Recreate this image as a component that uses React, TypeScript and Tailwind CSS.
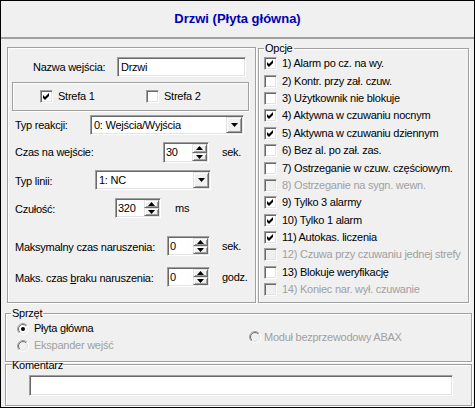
import React from "react";

const sunken =
  "border border-t-[#a0a0a0] border-l-[#a0a0a0] border-b-white border-r-white shadow-[inset_1px_1px_0_#696969,inset_-1px_-1px_0_#e3e3e3]";
const raised =
  "border border-t-[#e3e3e3] border-l-[#e3e3e3] border-b-[#696969] border-r-[#696969] shadow-[inset_1px_1px_0_#ffffff,inset_-1px_-1px_0_#a0a0a0] bg-[#f0f0f0]";
const etched = "border border-[#a0a0a0] shadow-[inset_1px_1px_0_#ffffff,1px_1px_0_#ffffff]";

function Check({ checked, disabled }: { checked?: boolean; disabled?: boolean }) {
  return (
    <div
      className={`w-[13px] h-[13px] shrink-0 flex items-center justify-center ${sunken} ${
        disabled ? "bg-[#f0f0f0]" : "bg-white"
      }`}
    >
      {checked && (
        <svg width="7" height="7" viewBox="0 0 7 7">
          <polygon points="0,2 2,4 6,0 6,3 2,7 0,5" fill={disabled ? "#a0a0a0" : "#000"} />
        </svg>
      )}
    </div>
  );
}

function Radio({ checked, disabled, id }: { checked?: boolean; disabled?: boolean; id: string }) {
  return (
    <svg width="12" height="12" viewBox="0 0 12 12" className="shrink-0">
      <defs>
        <linearGradient id={`o${id}`} x1="0" y1="0" x2="1" y2="1">
          <stop offset="0.5" stopColor="#a0a0a0" />
          <stop offset="0.5" stopColor="#ffffff" />
        </linearGradient>
        <linearGradient id={`i${id}`} x1="0" y1="0" x2="1" y2="1">
          <stop offset="0.5" stopColor="#696969" />
          <stop offset="0.5" stopColor="#e3e3e3" />
        </linearGradient>
      </defs>
      <circle cx="6" cy="6" r="5.5" fill={disabled ? "#f0f0f0" : "#fff"} stroke={`url(#o${id})`} />
      <circle cx="6" cy="6" r="4.5" fill="none" stroke={`url(#i${id})`} />
      {checked && <circle cx="6" cy="6" r="2" fill="#000" />}
    </svg>
  );
}

function Select({ w, text }: { w: string; text: string }) {
  return (
    <div className={`${w} h-[20px] bg-white flex items-center ${sunken}`}>
      <span className="flex-1 pl-[3px] whitespace-nowrap">{text}</span>
      <div className={`w-[16px] h-[16px] mr-[1px] flex items-center justify-center ${raised}`}>
        <svg width="7" height="4" viewBox="0 0 7 4">
          <polygon points="0,0 7,0 3.5,4" fill="#000" />
        </svg>
      </div>
    </div>
  );
}

function Spin({ w, h, text }: { w: string; h: string; text: string }) {
  return (
    <div className={`${w} ${h} bg-white flex items-stretch ${sunken}`}>
      <span className="flex-1 pl-[2px] flex items-center">{text}</span>
      <div className="w-[15px] flex flex-col py-[1px] mr-[1px]">
        <div className={`flex-1 flex items-center justify-center ${raised}`}>
          <svg width="7" height="4" viewBox="0 0 7 4">
            <polygon points="0,4 7,4 3.5,0" fill="#000" />
          </svg>
        </div>
        <div className={`flex-1 flex items-center justify-center ${raised}`}>
          <svg width="7" height="4" viewBox="0 0 7 4">
            <polygon points="0,0 7,0 3.5,4" fill="#000" />
          </svg>
        </div>
      </div>
    </div>
  );
}

const options: { t: string; c?: boolean; d?: boolean }[] = [
  { t: "1) Alarm po cz. na wy.", c: true },
  { t: "2) Kontr. przy zał. czuw." },
  { t: "3) Użytkownik nie blokuje" },
  { t: "4) Aktywna w czuwaniu nocnym", c: true },
  { t: "5) Aktywna w czuwaniu dziennym", c: true },
  { t: "6) Bez al. po zał. zas." },
  { t: "7) Ostrzeganie w czuw. częściowym." },
  { t: "8) Ostrzeganie na sygn. wewn.", d: true },
  { t: "9) Tylko 3 alarmy", c: true },
  { t: "10) Tylko 1 alarm", c: true },
  { t: "11) Autokas. liczenia", c: true },
  { t: "12) Czuwa przy czuwaniu jednej strefy", d: true },
  { t: "13) Blokuje weryfikację" },
  { t: "14) Koniec nar. wył. czuwanie", d: true },
];

export default function App() {
  return (
    <div className="w-[475px] h-[408px] border border-black bg-[#f0f0f0] flex flex-col text-[11px] leading-[13px] tracking-[-0.25px] text-black overflow-hidden font-['Liberation_Sans',Arial,sans-serif]">
      <div className="h-[36px] shrink-0 flex items-center justify-center pb-[2px] text-[13px] tracking-normal font-bold text-[#0000b4]">
        Drzwi (Płyta główna)
      </div>

      <div className="h-[268px] shrink-0 border-t-2 border-[#a0a0a0] flex items-start pl-[6px]">
        {/* left group */}
        <div className={`mt-[8px] w-[249px] h-[256px] flex flex-col ${etched}`}>
          <div className="mt-[9px] h-[20px] flex items-center pl-[25px]">
            <span className="w-[84px]">Nazwa wejścia:</span>
            <div className={`w-[129px] h-[20px] bg-white pl-[3px] flex items-center ${sunken}`}>Drzwi</div>
          </div>

          <div className={`mt-[5px] ml-[4px] w-[237px] h-[29px] flex items-center pl-[27px] ${etched}`}>
            <div className="w-[106px] flex items-center gap-[5px]">
              <Check checked />
              <span>Strefa 1</span>
            </div>
            <div className="flex items-center gap-[5px]">
              <Check />
              <span>Strefa 2</span>
            </div>
          </div>

          <div className="mt-[4px] h-[20px] flex items-center pl-[7px]">
            <span className="w-[75px]">Typ reakcji:</span>
            <Select w="w-[154px]" text="0: Wejścia/Wyjścia" />
          </div>

          <div className="mt-[7px] h-[21px] flex items-center pl-[7px]">
            <span className="w-[148px]">Czas na wejście:</span>
            <Spin w="w-[46px]" h="h-[21px]" text="30" />
            <span className="ml-[13px]">sek.</span>
          </div>

          <div className="mt-[7px] h-[20px] flex items-center pl-[7px]">
            <span className="w-[80px] pt-[3px]">Typ linii:</span>
            <Select w="w-[116px]" text="1: NC" />
          </div>

          <div className="mt-[8px] h-[20px] flex items-center pl-[7px]">
            <span className="w-[100px] pt-[2px]">Czułość:</span>
            <Spin w="w-[46px]" h="h-[20px]" text="320" />
            <span className="ml-[14px]">ms</span>
          </div>

          <div className="mt-[18px] h-[20px] flex items-center pl-[7px]">
            <span className="w-[152px] pt-[2px]">Maksymalny czas naruszenia:</span>
            <Spin w="w-[43px]" h="h-[20px]" text="0" />
            <span className="ml-[12px]">sek.</span>
          </div>

          <div className="mt-[11px] h-[20px] flex items-center pl-[7px]">
            <span className="w-[152px] pt-[2px]">
              Maks. czas <span className="underline">b</span>raku naruszenia:
            </span>
            <Spin w="w-[43px]" h="h-[20px]" text="0" />
            <span className="ml-[12px]">godz.</span>
          </div>
        </div>

        {/* right group */}
        <fieldset className={`mt-[3px] ml-[2px] w-[211px] h-[261px] ${etched}`}>
          <legend className="ml-[5px] px-[1px] leading-[13px]">Opcje</legend>
          <div className="flex flex-col">
            {options.map((o, i) => (
              <div
                key={i}
                className={`h-[17.4px] flex items-center pl-[5px] gap-[5px] whitespace-nowrap ${
                  o.d ? "text-[#a0a0a0]" : ""
                }`}
              >
                <Check checked={o.c} disabled={o.d} />
                <span>{o.t}</span>
              </div>
            ))}
          </div>
        </fieldset>
      </div>

      {/* Sprzet */}
      <fieldset className={`mt-[2px] ml-[4px] w-[467px] h-[55px] shrink-0 ${etched}`}>
        <legend className="ml-[5px] px-[1px] leading-[13px]">Sprzęt</legend>
        <div className="flex">
          <div className="w-[243px] pl-[11px] flex flex-col">
            <div className="h-[17px] flex items-center gap-[5px]">
              <Radio id="a" checked />
              <span>Płyta główna</span>
            </div>
            <div className="h-[17px] flex items-center gap-[5px] text-[#a0a0a0]">
              <Radio id="b" disabled />
              <span>Ekspander wejść</span>
            </div>
          </div>
          <div className="h-[34px] flex items-center gap-[3px] text-[#a0a0a0]">
            <Radio id="c" disabled />
            <span>Moduł bezprzewodowy ABAX</span>
          </div>
        </div>
      </fieldset>

      {/* Komentarz */}
      <fieldset className={`-mt-[6px] ml-[4px] w-[467px] h-[50px] shrink-0 ${etched}`}>
        <legend className="ml-[6px] leading-[13px] pt-[3px]">Komentarz</legend>
        <div className={`mt-[3px] ml-[23px] w-[424px] h-[21px] bg-white ${sunken}`} />
      </fieldset>
    </div>
  );
}
